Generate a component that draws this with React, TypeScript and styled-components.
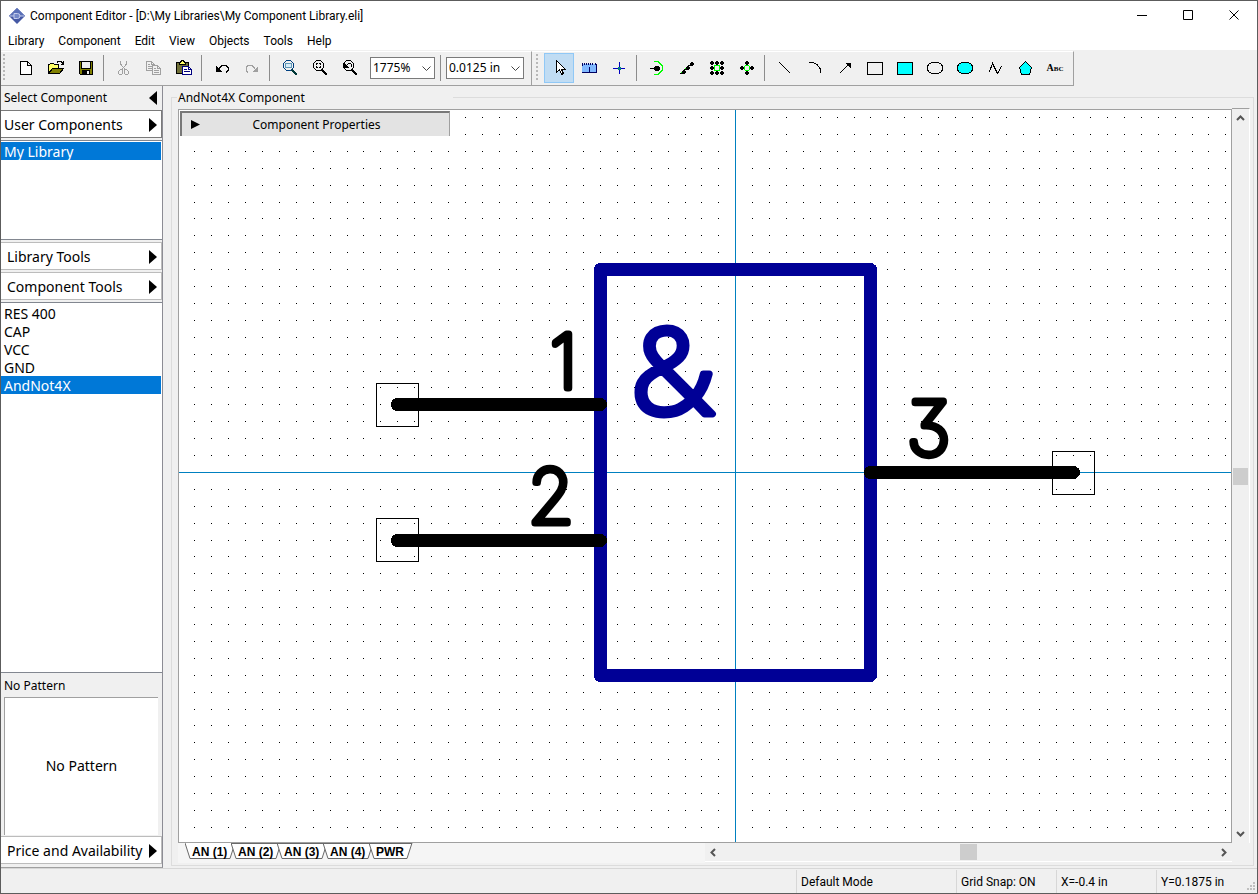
import React, { useState } from "react";
import styled, { createGlobalStyle, css } from "styled-components";

const uiFont = `Roboto, "Open Sans", sans-serif`;
const panelFont = `"Noto Sans", "Open Sans", sans-serif`;

const GlobalStyle = createGlobalStyle`
  * { box-sizing: border-box; }
  body { margin: 0; background: #f0f0f0; color: #000; font: 12px/16px ${uiFont}; }
  button { margin: 0; padding: 0; border: 0; background: none; color: inherit; font: inherit; text-align: left; }
  ul { margin: 0; padding: 0; list-style: none; }
  svg { display: block; flex: none; }
`;

const Window = styled.div`
  display: flex;
  flex-direction: column;
  height: 100vh;
  min-height: 560px;
  border: 1px solid #5c5c5c;
  background: #f0f0f0;
  overflow: hidden;
`;

/* ---------- title and menu ---------- */
const TitleBar = styled.header`
  display: flex;
  align-items: center;
  height: 29px;
  padding-left: 8px;
  background: #fff;
`;
const Title = styled.h1`
  flex: 1;
  margin: 0 0 0 5px;
  font: 12px/16px ${uiFont};
  white-space: nowrap;
`;
const CaptionButton = styled.button`
  display: flex;
  align-items: center;
  justify-content: center;
  width: 46px;
  height: 29px;
`;
const MenuBar = styled.nav`
  display: flex;
  align-items: center;
  height: 20px;
  background: #fff;
`;
const MenuItem = styled.button`
  padding: 2px 7px 0;
`;

/* ---------- toolbars ---------- */
const ToolStrip = styled.div`
  display: flex;
  width: max-content;
  height: 36px;
  padding-top: 1px;
  border-bottom: 1px solid #a0a0a0;
`;
const ToolBar = styled.div`
  display: flex;
  align-items: center;
  height: 34px;
  padding: 0 4px 2px 2px;
  border-top: 1px solid #fff;
  border-right: 1px solid #a0a0a0;
`;
const DrawBar = styled(ToolBar)`
  padding: 0 3px 2px 4px;
`;
const Grip = styled.div`
  width: 2px;
  height: 28px;
  margin-right: 6px;
  background: repeating-linear-gradient(#b8b8b8 0 2px, transparent 2px 4px);
`;
const ToolButton = styled.button<{ $active?: boolean }>`
  display: flex;
  align-items: center;
  justify-content: center;
  width: 30px;
  height: 30px;
  ${(p) => p.$active && css`
    border: 1px solid #90c8f6;
    background: #c0dcf3;
  `}
`;
const Separator = styled.div`
  width: 8px;
  height: 26px;
  background: linear-gradient(#8c8c8c, #8c8c8c) 2px 0 / 1px 100% no-repeat;
`;
const Combo = styled.div<{ $width: number }>`
  position: relative;
  width: ${(p) => p.$width}px;
  height: 22px;
  margin-right: 3px;
  ${ToolButton} + & { margin-left: 5px; }
`;
const ComboSelect = styled.select`
  width: 100%;
  height: 100%;
  padding: 0 2px;
  border: 1px solid #7a7a7a;
  border-radius: 0;
  background: #fff;
  color: #000;
  font: 12px/18px ${panelFont};
  appearance: none;
`;
const ComboArrow = styled.svg`
  position: absolute;
  right: 4px;
  top: 9px;
  pointer-events: none;
`;

/* ---------- body ---------- */
const Body = styled.div`
  display: flex;
  flex: 1;
  min-height: 0;
`;
const Sidebar = styled.aside`
  display: flex;
  flex-direction: column;
  width: 162px;
  padding-bottom: 1px;
  border-right: 1px solid #8c8c94;
  border-bottom: 1px solid #a0a0a0;
  font: 14px/18px ${panelFont};
`;
const SidebarHead = styled.div`
  display: flex;
  align-items: center;
  justify-content: space-between;
  height: 24px;
  padding: 0 5px 0 3px;
  font-size: 12px;
`;
const CollapseButton = styled.button`
  display: flex;
  height: 20px;
  align-items: center;
`;
const Expander = styled.button<{ $strong?: boolean }>`
  display: flex;
  align-items: center;
  justify-content: space-between;
  height: 28px;
  margin-bottom: 2px;
  padding: 2px 4px 0 ${(p) => (p.$strong ? 3 : 6)}px;
  border: 1px solid ${(p) => (p.$strong ? "#7a7a7a" : "#bcbcbc")};
  border-left: 0;
  background: #fff;
  white-space: nowrap;
`;
const ListBox = styled.ul<{ $grow?: boolean }>`
  height: 100px;
  margin-bottom: 2px;
  padding: 1px 1px 1px 0;
  border: solid #828790;
  border-width: 1px 0;
  background: #fff;
  overflow: hidden;
  ${(p) => p.$grow && css`
    flex: 1;
    min-height: 0;
    margin-bottom: 0;
  `}
`;
const ListItem = styled.button<{ $selected?: boolean }>`
  display: block;
  width: 100%;
  height: 18px;
  padding: 1px 3px 0;
  line-height: 18px;
  ${(p) => p.$selected && css`
    background: #0078d7;
    color: #fff;
  `}
`;
const PatternTitle = styled.div`
  height: 24px;
  padding: 0 3px;
  font-size: 12px;
  line-height: 26px;
`;
const PatternPreview = styled.div`
  display: flex;
  align-items: center;
  justify-content: center;
  height: 138px;
  margin: 0 4px 1px 3px;
  padding-bottom: 2px;
  border: solid #a0a0a0;
  border-width: 1px 0 0 1px;
  background: #fff;
`;

/* ---------- editor ---------- */
const Editor = styled.fieldset`
  display: flex;
  flex: 1;
  min-width: 0;
  min-height: 0;
  margin: 0 3px 2px 8px;
  padding: 0 3px 2px 6px;
  border: 1px solid #dcdcdc;
`;
const EditorTitle = styled.legend`
  width: 276px;
  height: 22px;
  margin-left: -1px;
  padding: 0 1px;
  font: 12px/24px ${panelFont};
`;
const Workspace = styled.div`
  display: grid;
  flex: 1;
  grid-template-columns: minmax(0, 1fr) 18px;
  grid-template-rows: minmax(0, 1fr) 20px;
  min-width: 0;
  min-height: 0;
`;
const Canvas = styled.div`
  position: relative;
  margin-top: 1px;
  border: 1px solid #a0a0a0;
  background: #fff;
  overflow: hidden;
`;
const Drawing = styled.svg`
  width: 100%;
  height: 100%;
`;
const PropertiesBar = styled.button`
  position: absolute;
  left: 1px;
  top: 1px;
  display: flex;
  align-items: center;
  width: 270px;
  height: 25px;
  padding: 0 16px 0 9px;
  border: solid;
  border-width: 2px 1px 0 2px;
  border-color: #787878 #a0a0a0 #e3e3e3 #787878;
  background: #e3e3e3;
  font: 12px/18px ${panelFont};
`;
const PropertiesText = styled.span`
  flex: 1;
  text-align: center;
`;
const VerticalScroll = styled.div`
  display: flex;
  flex-direction: column;
  align-items: center;
  justify-content: space-between;
  padding: 5px 0 5px;
  border-top: 1px solid #a0a0a0;
  border-right: 1px solid #fff;
`;
const HorizontalScroll = styled.div`
  display: flex;
  flex: 1;
  align-items: center;
  justify-content: space-between;
  height: 19px;
  padding: 0 4px;
  border-bottom: 1px solid #fff;
`;
const ScrollTrack = styled.div<{ $vertical?: boolean; $before: number; $after: number }>`
  display: flex;
  flex: 1;
  flex-direction: ${(p) => (p.$vertical ? "column" : "row")};
  &::before { content: ""; flex: ${(p) => p.$before}; }
  &::after { content: ""; flex: ${(p) => p.$after}; }
`;
const ScrollThumb = styled.div<{ $vertical?: boolean }>`
  width: ${(p) => (p.$vertical ? 15 : 17)}px;
  height: ${(p) => (p.$vertical ? 17 : 16)}px;
  background: #cdcdcd;
`;
const SheetRow = styled.div`
  display: flex;
  min-width: 0;
`;
const SheetTabs = styled.div`
  display: flex;
  width: 50%;
  padding-left: 7px;
  background: #f5f5f5;
`;
const SheetTab = styled.button<{ $narrow?: boolean }>`
  position: relative;
  width: ${(p) => (p.$narrow ? 43 : 50)}px;
  height: 16px;
  margin-right: -4px;
  padding-left: 7px;
  font: bold 12px/18px "Liberation Sans", Arial, sans-serif;
  white-space: nowrap;
`;
const TabShape = styled.svg`
  position: absolute;
  left: 0;
  top: 0;
`;
const TabText = styled.span`
  position: relative;
`;

/* ---------- status bar ---------- */
const StatusBar = styled.footer`
  display: flex;
  height: 25px;
  border-top: 1px solid #d7d7d7;
`;
const StatusCell = styled.div<{ $width: number }>`
  width: ${(p) => p.$width}px;
  margin-top: 1px;
  padding-left: 4px;
  border-left: 1px solid #d7d7d7;
  line-height: 24px;
  white-space: nowrap;
`;
const StatusFill = styled.div`
  flex: 1;
`;
const SizeGrip = styled.svg`
  align-self: flex-end;
`;

/* ---------- icons ---------- */
const Icon = ({ children }: { children: React.ReactNode }) => (
  <svg width="18" height="18" viewBox="0 0 18 18" fill="none" stroke="#000" shapeRendering="crispEdges" aria-hidden="true">
    {children}
  </svg>
);

const lens = (color: string, handle: string) => (
  <>
    <path d="M5.5 1.5h4l3 3v4l-3 3h-4l-3-3v-4z" stroke={color} />
    <path d="M11 11l5 5" stroke={handle} strokeWidth="2" />
  </>
);

const Dots = ({ at }: { at: number[][] }) => (
  <>
    {at.map(([x, y]) => (
      <path key={`${x}-${y}`} d={`M${x - 1} ${y - 2}h2v1h1v2h-1v1h-2v-1h-1v-2h1z`} fill="#000" stroke="none" />
    ))}
  </>
);

const roundBox = "M5.5 3.5h7l3 2 1 2v3l-1 2-3 2h-7l-3-2-1-2v-3l1-2z";

const icons: Record<string, React.ReactNode> = {
  New: <path d="M3.5 2.5h7l4 4v9h-11zM10.5 2.5v4h4" fill="#fff" />,
  Open: (
    <>
      <path d="M1.5 14.5v-9h1l1-1h3l1 1h4v3" fill="#ffff66" />
      <path d="M1.5 14.5l4-5h11l-4 5z" fill="#808000" />
      <path d="M10 3.5l1-1h3l2 2M16.5 2v3.5M13.5 5.5h3" />
    </>
  ),
  Save: (
    <>
      <path d="M2.5 2.5h13v13h-12l-1-1z" fill="#808000" />
      <path d="M5 3h8v6h-8z" fill="#f0f0f0" stroke="none" />
      <path d="M4.5 3v6.5h9v-6.5" />
      <path d="M5 11h8v5h-8z" fill="#000" stroke="none" />
      <path d="M10 12h2v3h-2z" fill="#f0f0f0" stroke="none" />
    </>
  ),
  Cut: (
    <g stroke="#a0a0a0">
      <path d="M5.5 2v3l5 6M11.5 2v3l-5 6" />
      <path d="M5.5 10.5h1l1 1v3l-1 1h-2l-1-1v-2zM11.5 10.5h-1l-1 1v3l1 1h2l1-1v-2z" />
    </g>
  ),
  Copy: (
    <g stroke="#a0a0a0">
      <path d="M1.5 2.5h5l3 3v6h-8zM6.5 2.5v3h3M3 5.5h2M3 7.5h4M3 9.5h4" />
      <path d="M7.5 6.5h5l3 3v6h-8zM12.5 6.5v3h3M9 9.5h2M9 11.5h5M9 13.5h5" fill="#f0f0f0" />
    </g>
  ),
  Paste: (
    <>
      <path d="M1.5 3.5h12v11h-12z" fill="#707038" />
      <path d="M4.5 5.5v-2h1l1-2h2l1 2h1v2z" fill="#ffff66" />
      <path d="M7.5 7.5h6l3 3v5h-9z" fill="#fff" stroke="#000080" />
      <path d="M9 10.5h3M9 12.5h6M13.5 8v2.5h3" stroke="#000080" />
    </>
  ),
  Undo: (
    <>
      <path d="M3 7v6h6z" fill="#000" stroke="none" />
      <path d="M6 9.500l3-3h4l2 2v3l-2 2" />
    </>
  ),
  Redo: (
    <g stroke="#a0a0a0">
      <path d="M15 7v6h-6z" fill="#a0a0a0" stroke="none" />
      <path d="M12 9.500l-3-3h-4l-2 2v3l2 2" />
    </g>
  ),
  "Zoom window": (
    <>
      {lens("#004080", "#003838")}
      <path d="M4.5 4.5h6v4h-6z" fill="#d8ecf8" stroke="#6098b8" />
    </>
  ),
  "Zoom all": (
    <>
      {lens("#000", "#000")}
      <path d="M5.5 6v-1.500h1.500M8 4.500h1.500v1.500M9.500 7v1.500h-1.500M7 8.500h-1.500v-1.500" />
    </>
  ),
  "Zoom previous": (
    <>
      {lens("#000", "#000")}
      <path d="M3 4v5h5z" fill="#000" stroke="none" />
      <path d="M5.500 6.500l2-2h2l1 1v2" />
    </>
  ),
  Select: <path d="M6.500 1.500v12l3-3 2 5 2-1-2-4h4z" fill="#fff" />,
  Measure: (
    <>
      <path d="M2 5h14v9h-14z" fill="#80b8ff" stroke="none" />
      <path d="M2 13.500h14v-9M2.500 4v3M4.500 4v2M6.500 4v2M8.500 4v2M10.500 4v2M12.500 4v2M15.500 4v2" stroke="#000060" />
      <path d="M8.500 8.500h1v4" stroke="#000060" />
    </>
  ),
  Origin: (
    <>
      <path d="M3 9.500h12M9.500 3v12" stroke="#0000c0" />
      <path d="M8 8h3v3h-3z" fill="#008080" stroke="none" />
    </>
  ),
  Pin: (
    <>
      <path d="M6 2.500h4l4 4v5l-4 4h-4" stroke="#00ff00" />
      <path d="M2 9.500h10" />
      <path d="M7 7h4v1h1v3h-1v1h-4v-1h-1v-3h1z" fill="#000" stroke="none" />
    </>
  ),
  "Pin line": (
    <>
      <path d="M3 14l12-11" stroke="#00ff00" />
      <path d="M2 14.500h3M6 10.500h3M10 6.500h3" />
      <Dots at={[[6, 13], [10, 9], [14, 5]]} />
    </>
  ),
  "Pin rectangle": (
    <>
      <path d="M6.500 6.500h5v5h-5z" stroke="#00ff00" />
      <Dots at={[[4, 4], [9, 4], [14, 4], [4, 9], [14, 9], [4, 14], [9, 14], [14, 14]]} />
    </>
  ),
  "Pin circle": (
    <>
      <path d="M7.500 6.500h3l1 1v3l-1 1h-3l-1-1v-3z" stroke="#00ff00" />
      <Dots at={[[9, 4], [4, 9], [14, 9], [9, 14]]} />
    </>
  ),
  Line: <path d="M3.500 3.500l11 11" />,
  Arc: <path d="M3 3.500h4l4 2 3 4 1 4" />,
  Arrow: (
    <>
      <path d="M3.500 14.500l10-10" />
      <path d="M9 4h6v6z" fill="#000" stroke="none" />
    </>
  ),
  Rectangle: <path d="M1.500 3.500h15v12h-15z" />,
  "Filled rectangle": <path d="M1.500 3.500h15v12h-15z" fill="#00ffff" />,
  Ellipse: <path d={roundBox} />,
  "Filled ellipse": <path d={roundBox} fill="#00ffff" />,
  Polyline: <path d="M2.500 12.500h1l3-8 5 10 4-7" />,
  Polygon: <path d="M9.500 2.500l6 6-2 7h-8l-2-7z" fill="#00ffff" />,
};

const Caps = styled.span`
  font: bold 10px/18px "Liberation Serif", "Times New Roman", serif;
  font-variant: small-caps;
`;

const Arrow = ({ left }: { left?: boolean }) => (
  <svg width="8" height="14" viewBox="0 0 8 14" aria-hidden="true">
    <path d={left ? "M8 0v14L0 7z" : "M0 0v14L8 7z"} />
  </svg>
);

const turns = { up: 0, right: 90, down: 180, left: 270 };
const Chevron = ({ to }: { to: keyof typeof turns }) => (
  <svg width="9" height="9" viewBox="0 0 9 9" fill="none" stroke="#555" strokeWidth="2" aria-hidden="true">
    <path d="M1 6l3.500-3.500L8 6" transform={`rotate(${turns[to]} 4.500 4.500)`} />
  </svg>
);

/* Grid dots repeat every ten steps of 16.9px, each step snapped to a whole pixel. */
const stepsX = [0, 17, 34, 51, 68, 85, 102, 119, 135, 152];
const stepsY = [0, 17, 34, 51, 68, 84, 101, 118, 135, 152];

const Pin = ({ from, to, y, padX, padY }: { from: number; to: number; y: number; padX: number; padY: number }) => (
  <>
    <path d={`M${from} ${y}H${to}`} stroke="#000" strokeWidth="13" strokeLinecap="round" />
    <rect x={padX} y={padY} width="42" height="43" fill="none" stroke="#000" />
  </>
);

const PinNumber = styled.text`
  font: 100 74px Inter, sans-serif;
  font-feature-settings: "cv09";
  stroke: #000;
  stroke-width: 7px;
  stroke-linejoin: round;
`;
const GateSign = styled.text`
  font: 300 118px "Open Sans", sans-serif;
  fill: #000096;
  stroke: #000096;
  stroke-width: 7px;
  stroke-linejoin: round;
`;

const Schematic = () => (
  <Drawing role="img" aria-label="AndNot4X symbol">
    <defs>
      <pattern id="grid" x="556" y="362" width="169" height="169" patternUnits="userSpaceOnUse">
        {stepsY.map((y) => stepsX.map((x) => <rect key={`${x}-${y}`} x={x} y={y} width="1" height="1" />))}
      </pattern>
    </defs>
    <rect width="100%" height="100%" fill="url(#grid)" />
    <rect x="556" y="0" width="1" height="100%" fill="#0080c0" />
    <rect x="0" y="362" width="100%" height="1" fill="#0080c0" />
    <g shapeRendering="crispEdges">
      <rect x="421.500" y="159.500" width="270" height="406" fill="none" stroke="#000096" strokeWidth="13" strokeLinejoin="round" />
      <Pin from={218.5} to={421.5} y={294.5} padX={197.5} padY={273.5} />
      <Pin from={218.5} to={421.5} y={430.5} padX={197.5} padY={408.5} />
      <Pin from={691.5} to={894.5} y={362.5} padX={873.5} padY={341.5} />
    </g>
    <PinNumber x="371" y="278">1</PinNumber>
    <PinNumber x="349" y="413">2</PinNumber>
    <PinNumber x="728" y="345">3</PinNumber>
    <GateSign x="452" y="304">&amp;</GateSign>
  </Drawing>
);

const menus = ["Library", "Component", "Edit", "View", "Objects", "Tools", "Help"];
const parts = ["RES 400", "CAP", "VCC", "GND", "AndNot4X"];
const sheets = ["AN (1)", "AN (2)", "AN (3)", "AN (4)", "PWR"];

const Tools = ({ names, active }: { names: string[]; active?: string }) => (
  <>
    {names.map((n) => (
      <ToolButton key={n} aria-label={n} $active={n === active}>
        <Icon>{icons[n]}</Icon>
      </ToolButton>
    ))}
  </>
);

const ComboBox = ({ label, value, width }: { label: string; value: string; width: number }) => (
  <Combo $width={width}>
    <ComboSelect aria-label={label} defaultValue={value}>
      <option>{value}</option>
    </ComboSelect>
    <ComboArrow width="9" height="6" viewBox="0 0 9 6" fill="none" stroke="#444">
      <path d="M0.500 0.500l4 4 4-4" />
    </ComboArrow>
  </Combo>
);

export default function App() {
  const [part, setPart] = useState("AndNot4X");
  const [sheet, setSheet] = useState("AN (1)");
  return (
    <>
      <GlobalStyle />
      <Window>
        <TitleBar>
          <svg width="16" height="16" viewBox="0 0 16 16" aria-hidden="true">
            <path d="M8 0l8 8-8 8-8-8z" fill="#4558a4" />
            <path d="M8 0l8 8H0z" fill="#5a70b8" />
            <path d="M1 8h4M11 8h4M5 5.500h3.500a2.500 2.500 0 0 1 0 5H5z" fill="#7488c8" stroke="#c4cdec" />
          </svg>
          <Title>Component Editor - [D:\My Libraries\My Component Library.eli]</Title>
          <CaptionButton aria-label="Minimize">
            <svg width="11" height="11"><path d="M0 5.500h10" stroke="#000" /></svg>
          </CaptionButton>
          <CaptionButton aria-label="Maximize">
            <svg width="11" height="11"><path d="M.5.5h9v9h-9z" fill="none" stroke="#000" /></svg>
          </CaptionButton>
          <CaptionButton aria-label="Close">
            <svg width="11" height="11"><path d="M.5.5l9 9M9.500.5l-9 9" stroke="#000" /></svg>
          </CaptionButton>
        </TitleBar>
        <MenuBar>
          {menus.map((m) => <MenuItem key={m}>{m}</MenuItem>)}
        </MenuBar>
        <ToolStrip>
          <ToolBar>
            <Grip />
            <Tools names={["New", "Open", "Save"]} />
            <Separator />
            <Tools names={["Cut", "Copy", "Paste"]} />
            <Separator />
            <Tools names={["Undo", "Redo"]} />
            <Separator />
            <Tools names={["Zoom window", "Zoom all", "Zoom previous"]} />
            <ComboBox label="Zoom" value="1775%" width={65} />
            <Separator />
            <ComboBox label="Grid size" value="0.0125 in" width={78} />
          </ToolBar>
          <DrawBar>
            <Grip />
            <Tools names={["Select", "Measure", "Origin"]} active="Select" />
            <Separator />
            <Tools names={["Pin", "Pin line", "Pin rectangle", "Pin circle"]} />
            <Separator />
            <Tools names={["Line", "Arc", "Arrow", "Rectangle", "Filled rectangle", "Ellipse", "Filled ellipse", "Polyline", "Polygon"]} />
            <ToolButton aria-label="Text"><Caps>Abc</Caps></ToolButton>
          </DrawBar>
        </ToolStrip>
        <Body>
          <Sidebar>
            <SidebarHead>
              Select Component
              <CollapseButton aria-label="Collapse"><Arrow left /></CollapseButton>
            </SidebarHead>
            <Expander $strong>User Components<Arrow /></Expander>
            <ListBox>
              <li><ListItem $selected>My Library</ListItem></li>
            </ListBox>
            <Expander>Library Tools<Arrow /></Expander>
            <Expander>Component Tools<Arrow /></Expander>
            <ListBox $grow>
              {parts.map((p) => (
                <li key={p}><ListItem $selected={p === part} onClick={() => setPart(p)}>{p}</ListItem></li>
              ))}
            </ListBox>
            <PatternTitle>No Pattern</PatternTitle>
            <PatternPreview>No Pattern</PatternPreview>
            <Expander>Price and Availability<Arrow /></Expander>
          </Sidebar>
          <Editor>
            <EditorTitle>AndNot4X Component</EditorTitle>
            <Workspace>
              <Canvas>
                <Schematic />
                <PropertiesBar>
                  <svg width="9" height="9" viewBox="0 0 9 9" aria-hidden="true"><path d="M0 0v9l9-4.500z" /></svg>
                  <PropertiesText>Component Properties</PropertiesText>
                </PropertiesBar>
              </Canvas>
              <VerticalScroll>
                <Chevron to="up" />
                <ScrollTrack $vertical $before={345} $after={344}><ScrollThumb $vertical /></ScrollTrack>
                <Chevron to="down" />
              </VerticalScroll>
              <SheetRow>
                <SheetTabs>
                  {sheets.map((s) => (
                    <SheetTab key={s} $narrow={s === "PWR"} onClick={() => setSheet(s)}>
                      <TabShape width="50" height="16" aria-hidden="true">
                        <path
                          d={s === "PWR" ? "M0 0l5 15.500h33l5-15.500" : "M0 0l5 15.500h40l5-15.500"}
                          fill="#fff"
                          stroke="#696969"
                        />
                        {s !== sheet && <path d={s === "PWR" ? "M0 .5h43" : "M0 .5h50"} stroke="#696969" />}
                      </TabShape>
                      <TabText>{s}</TabText>
                    </SheetTab>
                  ))}
                </SheetTabs>
                <HorizontalScroll>
                  <Chevron to="left" />
                  <ScrollTrack $before={242} $after={243}><ScrollThumb /></ScrollTrack>
                  <Chevron to="right" />
                </HorizontalScroll>
              </SheetRow>
            </Workspace>
          </Editor>
        </Body>
        <StatusBar>
          <StatusFill />
          <StatusCell $width={160}>Default Mode</StatusCell>
          <StatusCell $width={100}>Grid Snap: ON</StatusCell>
          <StatusCell $width={100}>X=-0.4 in</StatusCell>
          <StatusCell $width={88}>Y=0.1875 in</StatusCell>
          <SizeGrip width="13" height="12" fill="#bfbfbf" aria-hidden="true">
            <path d="M9 1h2v2h-2zM6 4h2v2h-2zM9 4h2v2h-2zM3 7h2v2h-2zM6 7h2v2h-2zM9 7h2v2h-2z" />
          </SizeGrip>
        </StatusBar>
      </Window>
    </>
  );
}
